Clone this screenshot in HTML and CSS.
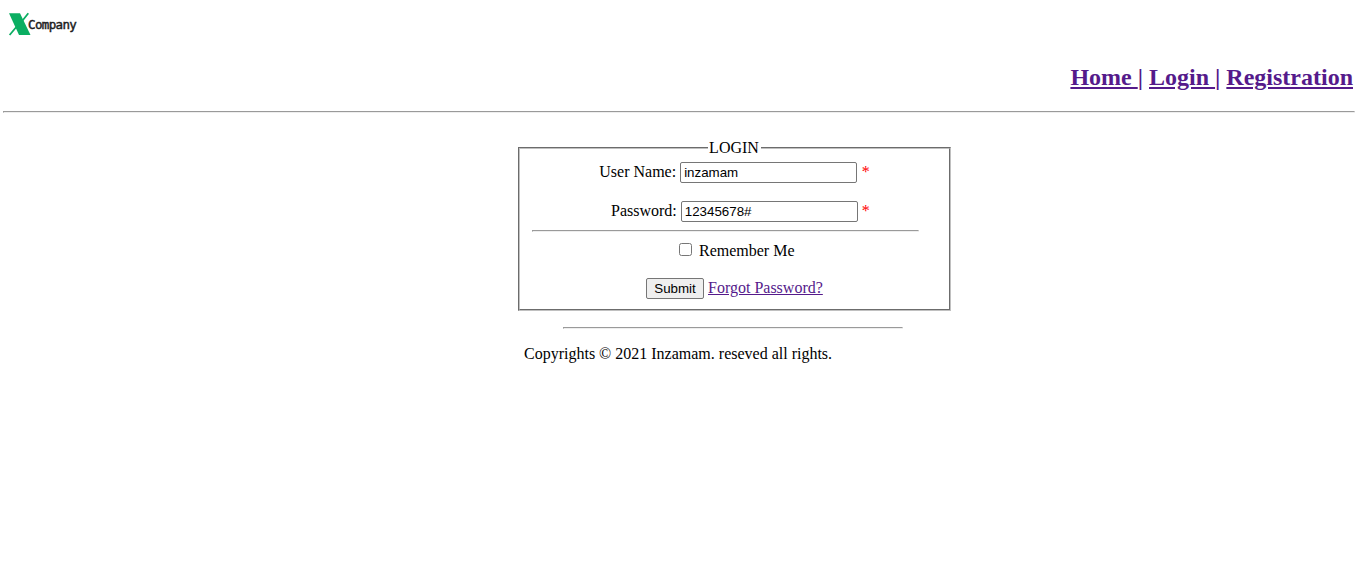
FILE: index.html
```html
<!DOCTYPE html>
<html lang="en">
<head>
<meta charset="utf-8">
<title>Login</title>
<link rel="stylesheet" href="styles.css">
</head>
<body>
<header class="header">
  <svg class="logo" width="100" height="36" viewBox="0 0 100 36" role="img" aria-label="X Company">
    <path d="M9 13.2H20L30.5 35H19Z" fill="#0bae62"/>
    <path d="M28.3 13.2L21 22.5M18 25L9.6 35" stroke="#0bae62" stroke-width="1.8" fill="none"/>
    <text class="logo-text" x="28" y="28.5">Company</text>
  </svg>
  <h2 class="nav"><a class="link" href="#">Home </a>| <a class="link" href="#">Login </a>| <a class="link" href="#">Registration</a></h2>
</header>
<hr class="rule rule-top">
<main class="main">
  <fieldset class="box">
    <legend class="legend">LOGIN</legend>
    <div class="row row-user"><label class="label" for="user">User Name:</label><input class="field" id="user" type="text" value="inzamam"><span class="required">*</span></div>
    <div class="row row-pass"><label class="label" for="pass">Password:</label><input class="field" id="pass" type="text" value="12345678#"><span class="required">*</span></div>
    <hr class="rule rule-box">
    <div class="row row-remember"><input class="check" id="remember" type="checkbox"><label for="remember">Remember Me</label></div>
    <div class="row row-submit"><button class="submit" type="button">Submit</button><a class="link forgot" href="#">Forgot Password?</a></div>
  </fieldset>
  <hr class="rule rule-footer">
  <footer class="copyright">Copyrights © 2021 Inzamam. reseved all rights.</footer>
</main>
</body>
</html>
```
FILE: styles.css
```css
* { box-sizing: border-box; }
body {
  margin: 0;
  background: #fff;
  color: #000;
  font: 16px/18px "Liberation Serif", "Times New Roman", serif;
}
.header { height: 111px; }
.logo { display: block; overflow: visible; }
.logo-text {
  font: 12.5px "DejaVu Sans Mono", monospace;
  letter-spacing: -0.65px;
  fill: #1c1c1c;
  stroke: #1c1c1c;
  stroke-width: 0.45px;
}
.nav {
  margin: 28px 7px 0 0;
  font-size: 24px;
  line-height: 27px;
  text-align: right;
}
.nav, .link { color: #551a8b; }
.rule { border: 1px inset #eee; margin: 0; height: 2px; }
.rule-top { margin: 0 5px 0 3px; }
.main { width: 433px; margin: 26px 0 0 518px; }
.box {
  height: 172px;
  margin: 0;
  padding: 5px 12px 0;
  border: 2px groove #c0c0c0;
}
.legend { margin: 0 auto; padding: 0 2px 0 1px; }
.row { display: flex; align-items: center; height: 21px; }
.row-user { padding-left: 67.3px; }
.row-pass { padding-left: 79px; margin-top: 18px; }
.label, .required, .forgot { margin-bottom: 2px; }
.row-pass .label { margin-bottom: 1px; }
.field {
  width: 177px;
  height: 21px;
  margin: 0 4.5px 0 4px;
  padding: 1px 3px;
  border: 1px solid #767676;
  border-radius: 2px;
  font: 13.333px "Liberation Sans", Arial, sans-serif;
}
.row-pass .field { margin-right: 4px; }
.required { color: #f00; }
.rule-box { width: 387px; margin-top: 8px; }
.row-remember { margin-top: 8px; padding-left: 147px; }
.check { width: 13px; height: 13px; margin: 0 7px 2px 0; }
.row-submit { margin-top: 17px; padding-left: 114px; }
.submit {
  width: 58px;
  height: 21px;
  margin-right: 4px;
  padding: 0;
  border: 1px solid #767676;
  border-radius: 2px;
  background: #efefef;
  font: 13.333px "Liberation Sans", Arial, sans-serif;
}
.rule-footer { width: 340px; margin: 16px 0 0 45px; }
.copyright { margin: 16px 0 0 6px; }
```
